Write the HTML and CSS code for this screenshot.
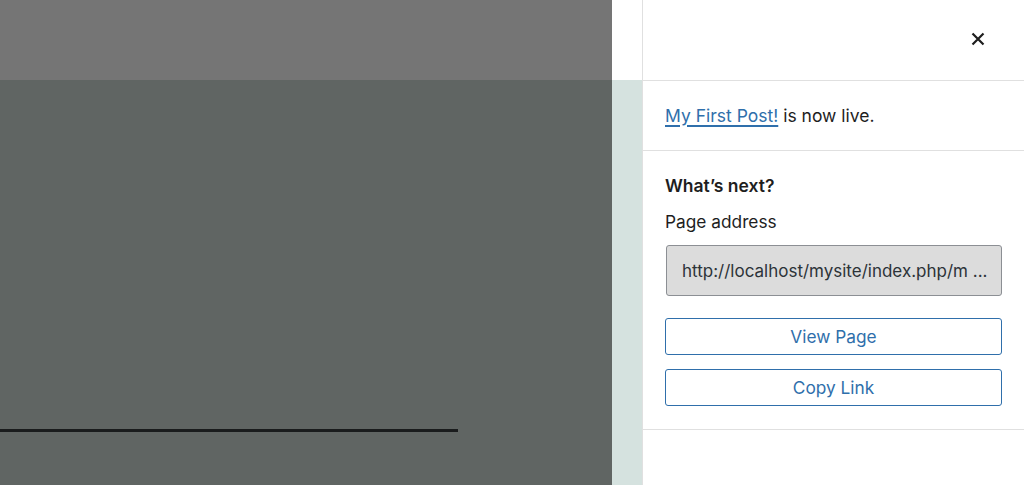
FILE: index.html
```html
<!DOCTYPE html>
<html lang="en">
<head>
<meta charset="utf-8">
<title>Post published</title>
<link rel="stylesheet" href="styles.css">
</head>
<body>
<div class="app">
  <div class="editor">
    <div class="editor-top"></div>
    <div class="editor-canvas">
      <div class="editor-rule"></div>
    </div>
  </div>
  <div class="strip">
    <div class="strip-top"></div>
    <div class="strip-body"></div>
  </div>
  <aside class="panel">
    <div class="panel-header">
      <button class="close" aria-label="Close">
        <svg width="24" height="24" viewBox="0 0 24 24"><path d="M6.5 6.5l11 11M17.5 6.5l-11 11" stroke="#1e1e1e" stroke-width="2.2" fill="none"/></svg>
      </button>
    </div>
    <div class="section live">
      <p class="live-text"><a href="#" class="post-link">My First Post!</a> is now live.</p>
    </div>
    <div class="section next">
      <h2 class="next-title">What’s next?</h2>
      <label class="field-label">Page address</label>
      <div class="address">http://localhost/mysite/index.php/m ...</div>
      <button class="btn">View Page</button>
      <button class="btn">Copy Link</button>
    </div>
  </aside>
</div>
</body>
</html>
```

FILE: styles.css
```css
* { box-sizing: border-box; }
html, body { margin: 0; padding: 0; }
body {
  font-family: Inter, "Noto Sans", "Liberation Sans", sans-serif;
  color: #1e1e1e;
  background: #fff;
}
.app {
  display: flex;
  width: 1024px;
  height: 485px;
  overflow: hidden;
}
.editor {
  width: 612px;
  display: flex;
  flex-direction: column;
}
.editor-top {
  height: 80px;
  background: #757575;
}
.editor-canvas {
  flex: 1;
  background: #606563;
  padding-top: 349px;
}
.editor-rule {
  width: 458px;
  height: 3px;
  background: #1a1c1d;
}
.strip {
  width: 30px;
  display: flex;
  flex-direction: column;
}
.strip-top { height: 80px; background: #fff; }
.strip-body { flex: 1; background: #d5e2df; }
.panel {
  width: 382px;
  border-left: 1px solid #e0e0e0;
  background: #fff;
}
.panel-header {
  height: 81px;
  border-bottom: 1px solid #e0e0e0;
  display: flex;
  align-items: center;
  justify-content: flex-end;
  padding-right: 34px;
}
.close {
  border: 0;
  background: none;
  padding: 0;
  width: 24px;
  height: 24px;
  display: flex;
  margin-top: -3px;
}
.section {
  padding: 0 22px;
  border-bottom: 1px solid #e0e0e0;
}
.live {
  height: 70px;
  padding-top: 23px;
}
.live-text {
  margin: 0;
  font-size: 17.5px;
  line-height: 24px;
}
.post-link {
  color: #2f6fab;
  text-decoration: underline;
  text-decoration-thickness: 1.5px;
  text-underline-offset: 3px;
}
.next {
  padding-top: 24px;
  padding-bottom: 23px;
  display: flex;
  flex-direction: column;
}
.next-title {
  margin: 0;
  font-size: 17.5px;
  font-weight: 600;
  line-height: 22px;
}
.field-label {
  margin-top: 14px;
  font-size: 17.3px;
  line-height: 22px;
}
.address {
  margin-top: 12px;
  margin-left: 1px;
  height: 51px;
  border: 1px solid #8c8f94;
  border-radius: 3px;
  background: #dcdcdc;
  display: flex;
  align-items: center;
  padding-left: 15px;
  font-size: 17px;
  color: #2c3338;
}
.btn {
  margin-top: 22px;
  height: 37px;
  border: 1px solid #2f6fab;
  border-radius: 3px;
  background: #fff;
  color: #2f6fab;
  font-family: inherit;
  font-size: 17.3px;
}
.btn + .btn { margin-top: 14px; }
```
